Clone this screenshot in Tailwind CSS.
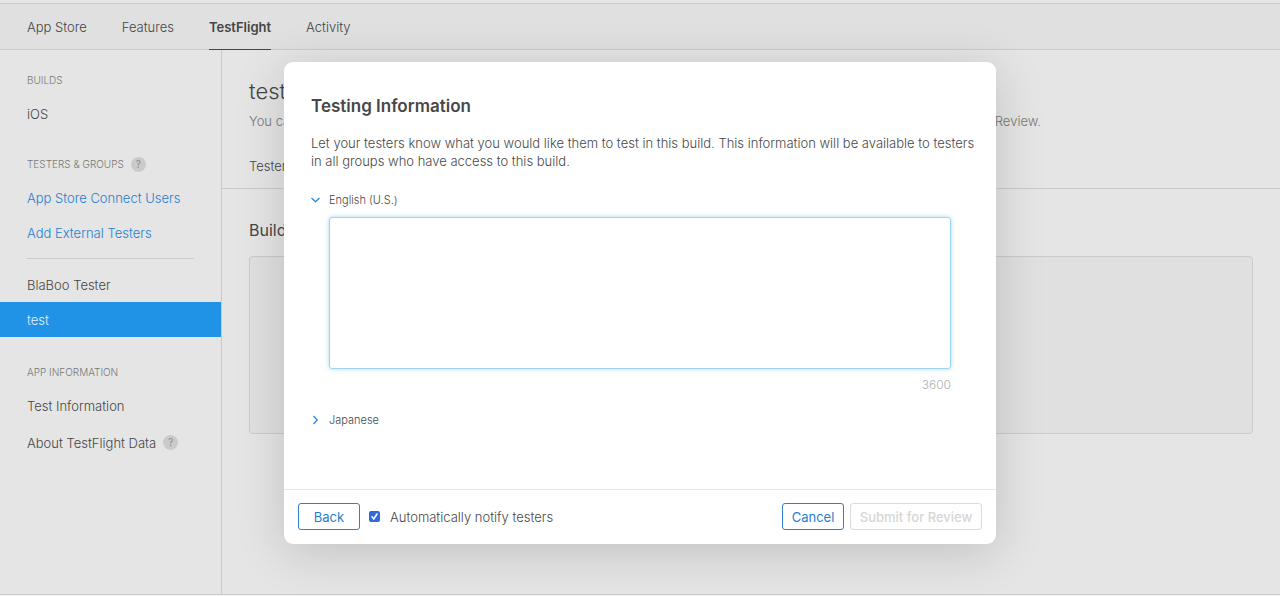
<!DOCTYPE html>
<html lang="en">
<head>
<meta charset="utf-8">
<meta name="viewport" content="width=device-width, initial-scale=1">
<title>TestFlight</title>
<script src="https://cdn.jsdelivr.net/npm/@tailwindcss/browser@4"></script>
</head>
<body class="relative flex min-h-screen flex-col bg-[#e5e5e5] font-['Inter',sans-serif] text-[13px] leading-[18px] font-light text-[#454545]">
  <div class="h-[3px]"></div>
  <header class="border-y border-[#cbcbcb] bg-[#e0e0e0] px-[27px]">
    <nav class="flex h-[45px] gap-[35px]">
      <a href="#" class="flex items-center pt-px">App Store</a>
      <a href="#" class="flex items-center pt-px">Features</a>
      <a href="#" class="-mb-px flex items-center border-b border-[#454545] pt-px font-semibold" aria-current="page">TestFlight</a>
      <a href="#" class="flex items-center pt-px">Activity</a>
    </nav>
  </header>

  <div class="flex grow border-b border-[#cbcbcb]">
    <aside class="w-[222px] shrink-0 border-r border-[#cbcbcb] pt-[21px]">
      <h2 class="px-[27px] text-[10px] font-light text-[#777]">BUILDS</h2>
      <a href="#" class="mt-[7px] flex h-[35px] items-center px-[27px]">iOS</a>
      <h2 class="mt-[24px] flex items-center gap-[7px] px-[27px] text-[10px] font-light text-[#777]">TESTERS &amp; GROUPS
        <button aria-label="Help: testers and groups" class="size-[15px] rounded-full bg-[#cacaca] text-[10px] leading-[15px] font-normal text-[#8c8c8c]">?</button>
      </h2>
      <a href="#" class="mt-[7px] flex h-[35px] items-center px-[27px] text-[#1f80cf]">App Store Connect Users</a>
      <a href="#" class="flex h-[35px] items-center px-[27px] text-[#1f80cf]">Add External Testers</a>
      <hr class="mx-[27px] mt-[8px] mb-[8px] border-[#cbcbcb]">
      <a href="#" class="flex h-[35px] items-center px-[27px]">BlaBoo Tester</a>
      <a href="#" class="flex h-[35px] items-center bg-[#2193e6] px-[27px] text-[#e5f2fb]" aria-current="page">test</a>
      <h2 class="mt-[26px] px-[27px] text-[10px] font-light text-[#777]">APP INFORMATION</h2>
      <a href="#" class="mt-[7px] flex h-[35px] items-center px-[27px]">Test Information</a>
      <div class="mt-[2px] flex h-[35px] items-center gap-[7px] px-[27px]">
        <a href="#">About TestFlight Data</a>
        <button aria-label="Help: TestFlight data" class="size-[15px] rounded-full bg-[#cacaca] text-[10px] leading-[15px] font-normal text-[#8c8c8c]">?</button>
      </div>
    </aside>

    <main class="min-w-0 grow">
      <div class="border-b border-[#cbcbcb] px-[27px] pt-[26px] pb-[13px]">
        <h1 class="text-[22px] leading-[30px]">test</h1>
        <p class="mt-[6px] whitespace-nowrap text-[#777]">You can add new builds to this group and invite external testers, who can start testing once the build has been submitted to Review.</p>
        <a href="#" class="mt-[27px] inline-block">Testers</a>
      </div>
      <div class="px-[27px] pt-[31px]">
        <h2 class="text-[16px] leading-[20px] font-normal">Builds</h2>
        <div class="mt-[16px] h-[178px] rounded-sm border border-[#cbcbcb] bg-[#e0e0e0]"></div>
      </div>
    </main>
  </div>
  <div class="h-px bg-[#f4f4f4]"></div>

  <div class="absolute inset-0 flex items-start justify-center pt-[62px]">
    <section role="dialog" aria-labelledby="dialog-title" class="w-[712px] rounded-[9px] bg-white text-[#484848] shadow-[0_8px_50px_rgba(0,0,0,0.16)]">
      <div class="px-[27px] pt-[33px] pb-[60px]">
        <h2 id="dialog-title" class="text-[17px] leading-[22px] font-semibold text-[#484848]">Testing Information</h2>
        <p class="-mr-[18px] mt-[17px]">Let your testers know what you would like them to test in this build. This information will be available to testers in all groups who have access to this build.</p>
        <button class="mt-[21px] flex items-center gap-[8px] text-[11px]" aria-expanded="true">
          <svg class="size-[10px]" viewBox="0 0 10 10" fill="none" stroke="#2a8ad8" stroke-width="1.3" aria-hidden="true"><path d="M0.5 3 L4.5 6.8 L8.5 3"/></svg>
          <span>English (U.S.)</span>
        </button>
        <div class="mt-[8px] px-[18px]">
          <textarea aria-label="English (U.S.)" class="block h-[152px] w-full resize-none rounded-[3px] border border-[#9fd3f2] px-3 py-2 shadow-[0_0_4px_rgba(80,180,240,0.5)] outline-none"></textarea>
          <p class="mt-[7px] text-right text-[12px] text-[#b0b0b0]">3600</p>
        </div>
        <button class="mt-[17px] flex items-center gap-[8px] text-[11px]" aria-expanded="false">
          <svg class="size-[10px]" viewBox="0 0 10 10" fill="none" stroke="#2a8ad8" stroke-width="1.3" aria-hidden="true"><path d="M2.5 1 L6.3 5 L2.5 9"/></svg>
          <span>Japanese</span>
        </button>
      </div>
      <footer class="flex items-center border-t border-[#e6e6e6] px-[14px] pt-[13px] pb-[14px]">
        <button class="h-[27px] w-[62px] rounded-[3px] border border-[#2f80c8] font-normal text-[#1f80d0]">Back</button>
        <label class="ml-[9px] flex items-center gap-[10px]">
          <span class="relative flex size-[11px]">
            <input type="checkbox" checked class="size-[11px] appearance-none rounded-[2px] bg-[#2f68e0]">
            <svg class="pointer-events-none absolute inset-0 size-[11px]" viewBox="0 0 11 11" fill="none" stroke="#fff" stroke-width="1.6" stroke-linecap="round" aria-hidden="true"><path d="M3 5.8 L4.8 8 L8 3"/></svg>
          </span>
          <span>Automatically notify testers</span>
        </label>
        <button class="ml-auto h-[27px] w-[62px] rounded-[3px] border border-[#2f80c8] font-normal text-[#1f80d0]">Cancel</button>
        <button disabled class="ml-[6px] h-[27px] w-[132px] rounded-[3px] border border-[#dcdcdc] font-medium text-[#d6d6d6]">Submit for Review</button>
      </footer>
    </section>
  </div>
</body>
</html>
